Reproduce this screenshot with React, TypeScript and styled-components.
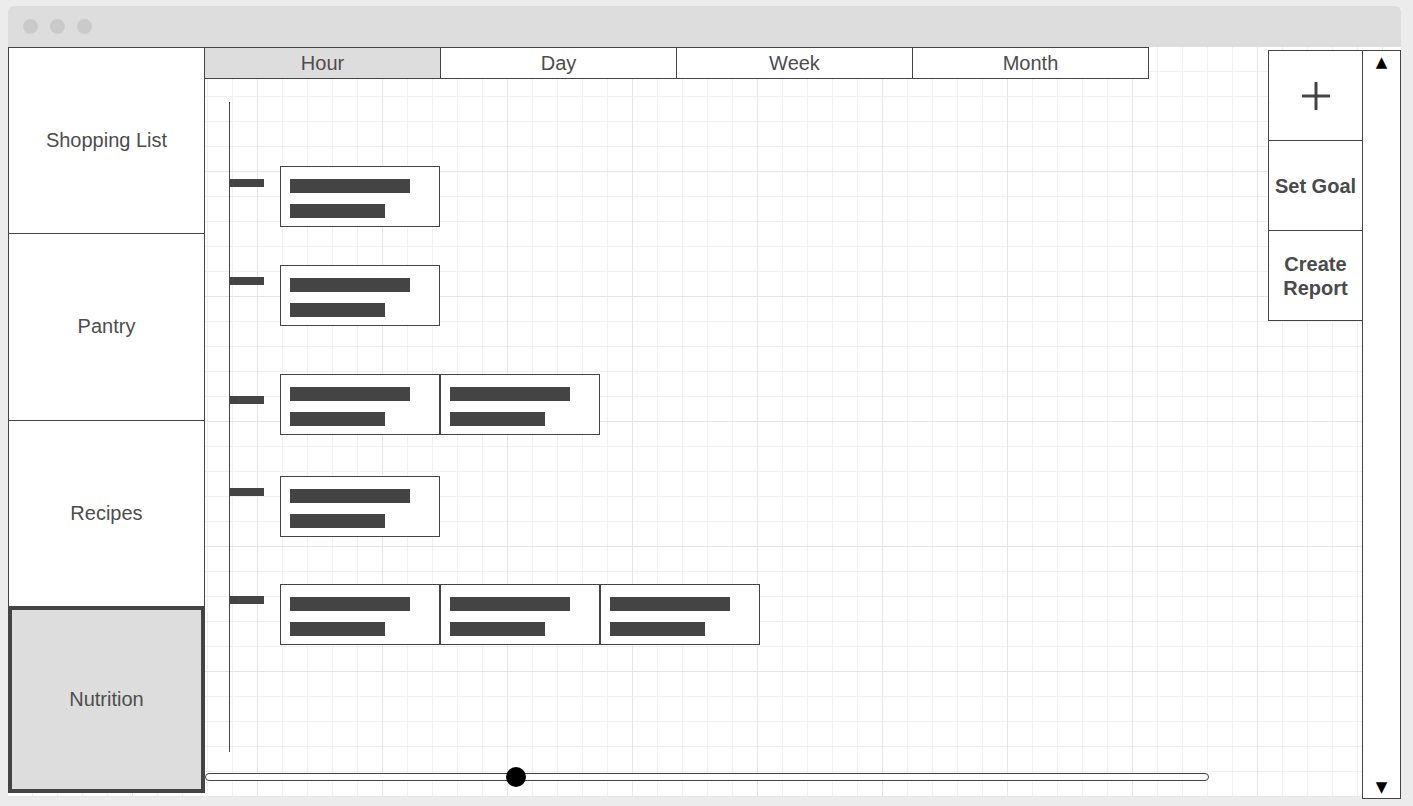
import React from 'react'
import styled, { createGlobalStyle } from 'styled-components'

const GlobalStyle = createGlobalStyle`
  * { box-sizing: border-box; }
  html, body { margin: 0; padding: 0; background: #ececec; }
  body { font-family: "Liberation Sans", Arial, sans-serif; }
`

const Page = styled.div`
  width: 1413px;
  height: 806px;
  padding: 6px 12px 0 8px;
  overflow: hidden;
`

const Window = styled.div`
  width: 1393px;
`

const TitleBar = styled.div`
  height: 41px;
  background: #dddddd;
  border-radius: 6px 6px 0 0;
  display: flex;
  align-items: center;
  gap: 12px;
  padding-left: 15px;
`

const Dot = styled.span`
  width: 15px;
  height: 15px;
  border-radius: 50%;
  background: #cacaca;
`

const Body = styled.div`
  display: flex;
  align-items: flex-start;
  height: 750px;
  background-color: #ffffff;
  background-image:
    linear-gradient(#e6e6e6 1px, transparent 1px),
    linear-gradient(90deg, #e6e6e6 1px, transparent 1px),
    linear-gradient(#f0f0f0 1px, transparent 1px),
    linear-gradient(90deg, #f0f0f0 1px, transparent 1px);
  background-size: 125px 125px, 125px 125px, 25px 25px, 25px 25px;
  background-position: -1px -1px;
`

const Sidebar = styled.nav`
  width: 197px;
  height: 746px;
  display: flex;
  flex-direction: column;
`

const NavItem = styled.div<{ $active?: boolean }>`
  flex: 1 1 0;
  display: flex;
  align-items: center;
  justify-content: center;
  border: 1px solid #444;
  box-shadow: ${p => (p.$active ? 'inset 0 0 0 3px #444' : 'none')};
  background: ${p => (p.$active ? '#dddddd' : '#ffffff')};
  color: #4d4d4d;
  font-size: 20px;
  & + & { margin-top: -1px; }
`

const Main = styled.div`
  width: 1063px;
  display: flex;
  flex-direction: column;
`

const TabRow = styled.div`
  display: flex;
  margin-left: -1px;
`

const Tab = styled.div<{ $active?: boolean }>`
  width: 237px;
  height: 32px;
  display: flex;
  align-items: center;
  justify-content: center;
  border: 1px solid #444;
  background: ${p => (p.$active ? '#dddddd' : '#ffffff')};
  color: #4d4d4d;
  font-size: 20px;
  & + & { margin-left: -1px; }
`

const Timeline = styled.div`
  margin: 23px 0 0 24px;
  height: 650px;
  border-left: 1px solid #444;
  display: flex;
  flex-direction: column;
`

const Row = styled.div<{ $top: number }>`
  display: flex;
  align-items: flex-start;
  margin-top: ${p => p.$top}px;
`

const Tick = styled.div<{ $offset: number }>`
  width: 35px;
  height: 8px;
  margin: ${p => p.$offset}px 16px 0 -1px;
  background: #444;
`

const Card = styled.div`
  width: 160px;
  height: 61px;
  border: 1px solid #444;
  background: #fff;
  padding: 12px 0 0 9px;
  display: flex;
  flex-direction: column;
  gap: 11px;
`

const Bar = styled.div<{ $w: number }>`
  width: ${p => p.$w}px;
  height: 14px;
  background: #444;
`

const Slider = styled.div`
  position: relative;
  width: 1004px;
  height: 20px;
  margin-top: 15px;
  display: flex;
  align-items: center;
`

const Track = styled.div`
  width: 100%;
  height: 8px;
  border: 1px solid #444;
  border-radius: 4px;
  background: #fff;
`

const Thumb = styled.div`
  position: absolute;
  top: 0;
  width: 20px;
  height: 20px;
  border-radius: 50%;
  background: #000;
`

const ActionPanel = styled.div`
  width: 95px;
  margin-top: 3px;
  display: flex;
  flex-direction: column;
`

const ActionButton = styled.div`
  height: 91px;
  display: flex;
  align-items: center;
  justify-content: center;
  text-align: center;
  border: 1px solid #444;
  background: #fff;
  color: #4a4a4a;
  font-size: 20px;
  font-weight: bold;
  line-height: 24px;
  & + & { margin-top: -1px; }
`

const Scrollbar = styled.div`
  width: 39px;
  height: 749px;
  margin: 3px 0 0 -1px;
  border: 1px solid #444;
  background: #fff;
  display: flex;
  flex-direction: column;
  justify-content: space-between;
  align-items: center;
  padding: 2px 0 2px;
  font-family: "DejaVu Sans", sans-serif;
  font-size: 15px;
  color: #000;
`

const rows = [
  { top: 64, tick: 13, cards: 1 },
  { top: 38, tick: 12, cards: 1 },
  { top: 48, tick: 22, cards: 2 },
  { top: 41, tick: 12, cards: 1 },
  { top: 47, tick: 12, cards: 3 },
]

const PlusIcon = () => (
  <svg width="30" height="30" viewBox="0 0 30 30">
    <path d="M15 1V29M1 15H29" stroke="#444" strokeWidth="3" fill="none" />
  </svg>
)

export default function App() {
  const thumbPos = 301
  return (
    <Page>
      <GlobalStyle />
      <Window>
        <TitleBar>
          <Dot />
          <Dot />
          <Dot />
        </TitleBar>
        <Body>
          <Sidebar>
            <NavItem>Shopping List</NavItem>
            <NavItem>Pantry</NavItem>
            <NavItem>Recipes</NavItem>
            <NavItem $active>Nutrition</NavItem>
          </Sidebar>
          <Main>
            <TabRow>
              <Tab $active>Hour</Tab>
              <Tab>Day</Tab>
              <Tab>Week</Tab>
              <Tab>Month</Tab>
            </TabRow>
            <Timeline>
              {rows.map((r, i) => (
                <Row key={i} $top={r.top}>
                  <Tick $offset={r.tick} />
                  {Array.from({ length: r.cards }).map((_, j) => (
                    <Card key={j}>
                      <Bar $w={120} />
                      <Bar $w={95} />
                    </Card>
                  ))}
                </Row>
              ))}
            </Timeline>
            <Slider>
              <Track />
              <Thumb style={{ left: thumbPos }} />
            </Slider>
          </Main>
          <ActionPanel>
            <ActionButton>
              <PlusIcon />
            </ActionButton>
            <ActionButton>Set Goal</ActionButton>
            <ActionButton>
              Create
              <br />
              Report
            </ActionButton>
          </ActionPanel>
          <Scrollbar>
            <span>▲</span>
            <span>▼</span>
          </Scrollbar>
        </Body>
      </Window>
    </Page>
  )
}
